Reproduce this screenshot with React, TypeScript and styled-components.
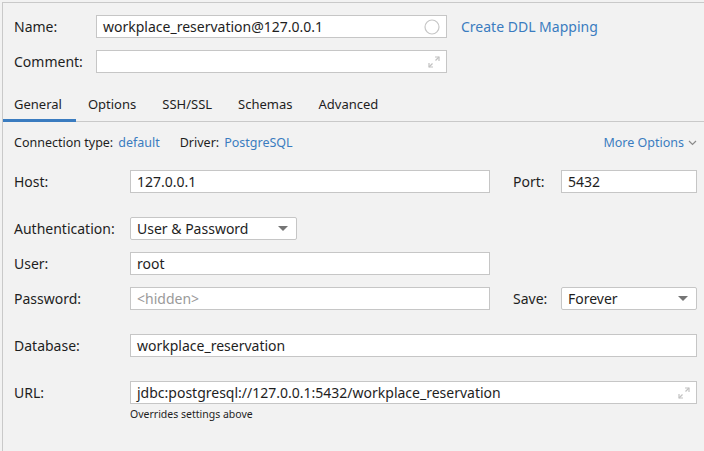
import React from 'react';
import styled, { createGlobalStyle } from 'styled-components';

const GlobalStyle = createGlobalStyle`
  html, body {
    margin: 0;
    padding: 0;
    background: #f2f2f2;
  }
  body {
    font-family: 'Noto Sans', 'Open Sans', sans-serif;
    color: #1e1e1e;
  }
`;

const StyledFrame = styled.div`
  margin: 2px 0 0 2px;
  height: 449px;
  box-sizing: border-box;
  border-top: 1px solid #c9c9c9;
  border-left: 1px solid #c9c9c9;
  background: #f2f2f2;
  overflow: hidden;
`;

const StyledHeader = styled.div`
  padding: 12px 0 0 11px;
  display: flex;
  flex-direction: column;
  gap: 12px;
`;

const StyledHeaderRow = styled.div`
  display: grid;
  grid-template-columns: 82px 351px auto;
  align-items: center;
  height: 23px;
`;

const StyledLabel = styled.span`
  font-size: 14px;
  color: #1e1e1e;
  white-space: nowrap;
`;

const StyledLink = styled.a<{ $size?: number }>`
  font-size: ${(p) => p.$size ?? 14}px;
  color: #3a7cc0;
  text-decoration: none;
  white-space: nowrap;
  cursor: pointer;
`;

const StyledDdlLink = styled(StyledLink)`
  margin-left: 14px;
`;

const StyledField = styled.div<{ $muted?: boolean }>`
  height: 23px;
  box-sizing: border-box;
  background: #fff;
  border: 1px solid #c6c6c6;
  display: flex;
  align-items: center;
  padding: 0 6px;
  font-size: 14px;
  color: ${(p) => (p.$muted ? '#9a9a9a' : '#1e1e1e')};
  white-space: nowrap;
  overflow: hidden;
`;

const StyledFieldText = styled.span`
  flex: 1;
`;

const StyledSelect = styled(StyledField)<{ $width?: number }>`
  border-radius: 2px;
  padding-right: 8px;
  ${(p) => (p.$width ? `width: ${p.$width}px;` : '')}
`;

const StyledCaret = styled.span`
  width: 0;
  height: 0;
  border-left: 5px solid transparent;
  border-right: 5px solid transparent;
  border-top: 5px solid #757575;
`;

const StyledTabBar = styled.div`
  display: flex;
  margin-top: 16px;
  margin-left: -1px;
  border-bottom: 1px solid #c9c9c9;
`;

const StyledTab = styled.div<{ $active?: boolean }>`
  padding: 6px 14px 6px 12px;
  font-size: 13px;
  color: #1e1e1e;
  border-bottom: 3px solid ${(p) => (p.$active ? '#3a7cc0' : 'transparent')};
  margin-bottom: -1px;
`;

const StyledInfoRow = styled.div`
  display: flex;
  align-items: center;
  padding: 12px 7px 0 11px;
  font-size: 12.5px;
  height: 17px;
`;

const StyledInfoLabel = styled.span`
  margin-right: 5px;
`;

const StyledInfoValue = styled(StyledLink)`
  margin-right: 20px;
`;

const StyledMore = styled(StyledLink)`
  margin-left: auto;
  display: flex;
  align-items: center;
  gap: 4px;
`;

const StyledForm = styled.div`
  padding: 0 7px 0 11px;
`;

const StyledRow = styled.div<{ $top: number }>`
  display: grid;
  grid-template-columns: 116px 360px 23px 48px 136px;
  align-items: center;
  margin-top: ${(p) => p.$top}px;
`;

const StyledWide = styled(StyledField)`
  grid-column: 2 / 6;
`;

const StyledSideLabel = styled(StyledLabel)`
  grid-column: 4;
`;

const StyledSideField = styled.div`
  grid-column: 5;
`;

const StyledHint = styled.div`
  grid-column: 2 / 6;
  font-size: 10.5px;
  color: #1e1e1e;
  margin-top: 3px;
`;

function ExpandIcon() {
  return (
    <svg width="12" height="12" viewBox="0 0 12 12" fill="none">
      <path d="M7 1h4v4" stroke="#c2c2c2" strokeWidth="1.2" />
      <path d="M11 1L7.5 4.5" stroke="#c2c2c2" strokeWidth="1.2" />
      <path d="M1 7v4h4" stroke="#c2c2c2" strokeWidth="1.2" />
      <path d="M1 11l3.5-3.5" stroke="#c2c2c2" strokeWidth="1.2" />
    </svg>
  );
}

function CircleIcon() {
  return (
    <svg width="16" height="16" viewBox="0 0 16 16" fill="none">
      <circle cx="8" cy="8" r="7" stroke="#c6c6c6" strokeWidth="1.2" />
    </svg>
  );
}

function ChevronIcon() {
  return (
    <svg width="9" height="6" viewBox="0 0 9 6" fill="none">
      <path d="M1 1l3.5 3.5L8 1" stroke="#8a8a8a" strokeWidth="1.2" />
    </svg>
  );
}

const tabs = ['General', 'Options', 'SSH/SSL', 'Schemas', 'Advanced'];

export default function App() {
  return (
    <>
      <GlobalStyle />
      <StyledFrame>
        <StyledHeader>
          <StyledHeaderRow>
            <StyledLabel>Name:</StyledLabel>
            <StyledField>
              <StyledFieldText>workplace_reservation@127.0.0.1</StyledFieldText>
              <CircleIcon />
            </StyledField>
            <StyledDdlLink>Create DDL Mapping</StyledDdlLink>
          </StyledHeaderRow>
          <StyledHeaderRow>
            <StyledLabel>Comment:</StyledLabel>
            <StyledField>
              <StyledFieldText />
              <ExpandIcon />
            </StyledField>
          </StyledHeaderRow>
        </StyledHeader>

        <StyledTabBar>
          {tabs.map((t, i) => (
            <StyledTab key={t} $active={i === 0}>
              {t}
            </StyledTab>
          ))}
        </StyledTabBar>

        <StyledInfoRow>
          <StyledInfoLabel>Connection type:</StyledInfoLabel>
          <StyledInfoValue $size={12.5}>default</StyledInfoValue>
          <StyledInfoLabel>Driver:</StyledInfoLabel>
          <StyledInfoValue $size={12.5}>PostgreSQL</StyledInfoValue>
          <StyledMore $size={12.5}>
            More Options <ChevronIcon />
          </StyledMore>
        </StyledInfoRow>

        <StyledForm>
          <StyledRow $top={19}>
            <StyledLabel>Host:</StyledLabel>
            <StyledField>127.0.0.1</StyledField>
            <StyledSideLabel>Port:</StyledSideLabel>
            <StyledSideField>
              <StyledField>5432</StyledField>
            </StyledSideField>
          </StyledRow>

          <StyledRow $top={24}>
            <StyledLabel>Authentication:</StyledLabel>
            <div>
              <StyledSelect $width={167}>
                <StyledFieldText>User &amp; Password</StyledFieldText>
                <StyledCaret />
              </StyledSelect>
            </div>
          </StyledRow>

          <StyledRow $top={12}>
            <StyledLabel>User:</StyledLabel>
            <StyledField>root</StyledField>
          </StyledRow>

          <StyledRow $top={12}>
            <StyledLabel>Password:</StyledLabel>
            <StyledField $muted>&lt;hidden&gt;</StyledField>
            <StyledSideLabel>Save:</StyledSideLabel>
            <StyledSideField>
              <StyledSelect>
                <StyledFieldText>Forever</StyledFieldText>
                <StyledCaret />
              </StyledSelect>
            </StyledSideField>
          </StyledRow>

          <StyledRow $top={24}>
            <StyledLabel>Database:</StyledLabel>
            <StyledWide>workplace_reservation</StyledWide>
          </StyledRow>

          <StyledRow $top={24}>
            <StyledLabel>URL:</StyledLabel>
            <StyledWide>
              <StyledFieldText>jdbc:postgresql://127.0.0.1:5432/workplace_reservation</StyledFieldText>
              <ExpandIcon />
            </StyledWide>
            <StyledHint>Overrides settings above</StyledHint>
          </StyledRow>
        </StyledForm>
      </StyledFrame>
    </>
  );
}
